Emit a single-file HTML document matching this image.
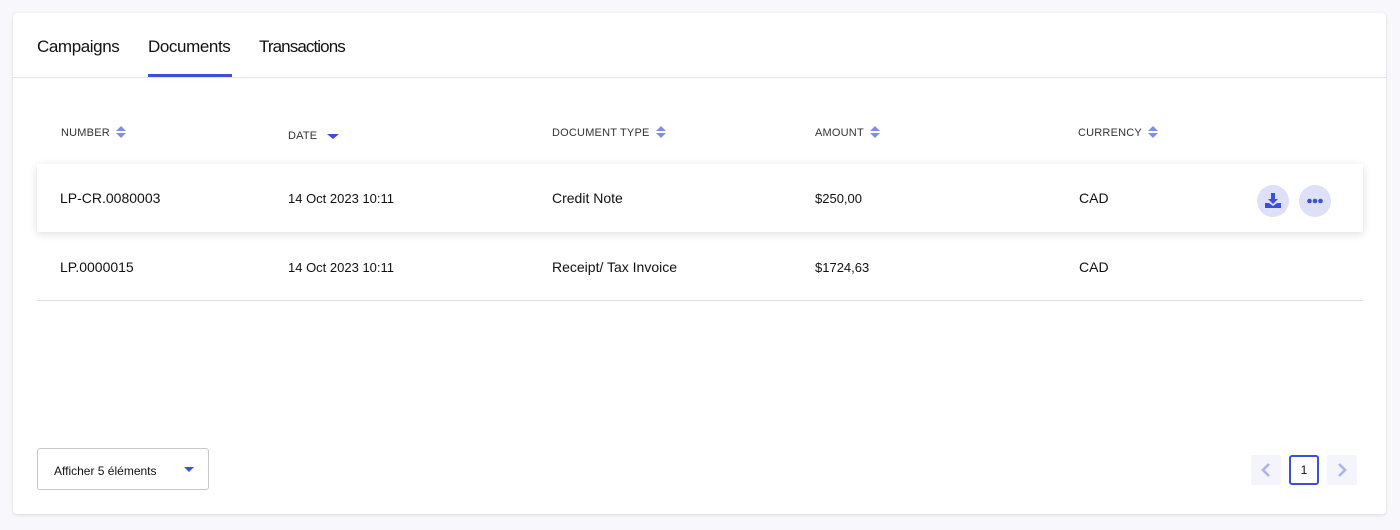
<!DOCTYPE html>
<html><head><meta charset="utf-8"><style>
*{box-sizing:border-box;margin:0;padding:0}
body{width:1400px;height:530px;background:#f7f7fc;font-family:"Liberation Sans",sans-serif;color:#111;position:relative;overflow:hidden}
.card{position:absolute;left:13px;top:13px;width:1373px;height:501px;background:#fff;border-radius:4px;box-shadow:0 1px 3px rgba(0,0,0,.12)}
.tabs{position:absolute;left:0;top:0;width:100%;height:65px;border-bottom:1px solid #e2e2e8}
.tab{position:absolute;top:24px;font-size:17px;color:#111;letter-spacing:-0.4px}
.ul{position:absolute;left:135px;top:61px;width:84px;height:3px;background:#3b4fd8}
.th{position:absolute;top:113px;font-size:11px;color:#333;letter-spacing:.2px}
.s{display:inline-block;vertical-align:middle;margin-left:6px;margin-top:-3px}
.row1{position:absolute;left:24px;top:151px;width:1326px;height:68px;background:#fff;box-shadow:0 2px 8px rgba(0,0,0,.13)}
.td{position:absolute;font-size:14px;color:#111}
.sm{font-size:13px}
.line{position:absolute;left:24px;top:287px;width:1326px;height:1px;background:#dcdce0}
.circ{position:absolute;width:32px;height:32px;border-radius:50%;background:#dde0f7}
.sel{position:absolute;left:24px;top:435px;width:172px;height:42px;border:1px solid #c8c8cc;border-radius:3px;font-size:12px;padding:15px 0 0 16px}
.pg{position:absolute;top:442px;width:30px;height:30px;border-radius:3px}
</style></head><body>
<div class="card">
<div class="tabs">
<div class="tab" style="left:24px">Campaigns</div>
<div class="tab" style="left:135px">Documents</div>
<div class="tab" style="left:246px;letter-spacing:-0.9px">Transactions</div>
<div class="ul"></div>
</div>
<div class="th" style="left:48px;top:114px">NUMBER<svg class="s" width="10" height="14"><path d="M5 1L10 6H0Z M5 13L10 8H0Z" fill="#7f8ee8"/></svg></div>
<div class="th" style="left:275px;top:114px">DATE<svg class="s" width="12" height="14" style="margin-left:10px;margin-top:4px"><path d="M0 3H12L6 8Z" fill="#3b4fd8"/></svg></div>
<div class="th" style="left:539px;top:114px">DOCUMENT TYPE<svg class="s" width="10" height="14"><path d="M5 1L10 6H0Z M5 13L10 8H0Z" fill="#7f8ee8"/></svg></div>
<div class="th" style="left:802px;top:114px">AMOUNT<svg class="s" width="10" height="14"><path d="M5 1L10 6H0Z M5 13L10 8H0Z" fill="#7f8ee8"/></svg></div>
<div class="th" style="left:1065px;top:114px">CURRENCY<svg class="s" width="10" height="14"><path d="M5 1L10 6H0Z M5 13L10 8H0Z" fill="#7f8ee8"/></svg></div>
<div class="row1"></div>
<div class="td" style="left:47px;top:177px">LP-CR.0080003</div>
<div class="td sm" style="left:275px;top:178px">14 Oct 2023 10:11</div>
<div class="td" style="left:539px;top:177px">Credit Note</div>
<div class="td sm" style="left:802px;top:178px">$250,00</div>
<div class="td" style="left:1066px;top:177px">CAD</div>
<div class="circ" style="left:1244px;top:172px"><svg width="32" height="32"><path d="M14 8h4v6h3l-5 5-5-5h3z" fill="#3b4fd8"/><path d="M8 18h4l4 3 4-3h4v5H8z" fill="#3b4fd8"/></svg></div>
<div class="circ" style="left:1286px;top:172px"><svg width="32" height="32"><circle cx="10.5" cy="16" r="2.3" fill="#3b4fd8"/><circle cx="16" cy="16" r="2.3" fill="#3b4fd8"/><circle cx="21.5" cy="16" r="2.3" fill="#3b4fd8"/></svg></div>
<div class="td" style="left:47px;top:246px">LP.0000015</div>
<div class="td sm" style="left:275px;top:247px">14 Oct 2023 10:11</div>
<div class="td" style="left:539px;top:246px">Receipt/ Tax Invoice</div>
<div class="td sm" style="left:802px;top:247px">$1724,63</div>
<div class="td" style="left:1066px;top:246px">CAD</div>
<div class="line"></div>
<div class="sel">Afficher 5 éléments<svg width="10" height="6" style="position:absolute;left:146px;top:18px"><path d="M0 0H10L5 5Z" fill="#3b4fd8"/></svg></div>
<div class="pg" style="left:1238px;background:#f3f4fc"><svg width="30" height="30"><path d="M18 9l-6 6 6 6" stroke="#aab3f0" stroke-width="2.5" fill="none"/></svg></div>
<div class="pg" style="left:1276px;border:2px solid #3b4fd8;font-size:12px;text-align:center;line-height:26px">1</div>
<div class="pg" style="left:1314px;background:#f3f4fc"><svg width="30" height="30"><path d="M12 9l6 6-6 6" stroke="#aab3f0" stroke-width="2.5" fill="none"/></svg></div>
</div>
</body></html>
